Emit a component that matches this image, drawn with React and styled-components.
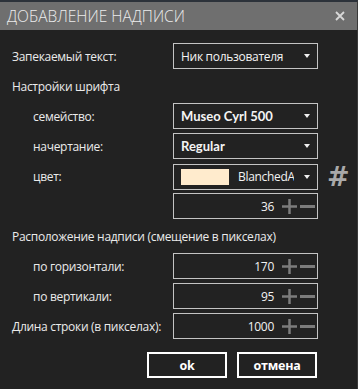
import React from "react";
import styled, { createGlobalStyle } from "styled-components";

const Global = createGlobalStyle`
  html, body { margin: 0; padding: 0; background: #222222; }
  body { font-family: "Open Sans", "Noto Sans", sans-serif; }
  * { box-sizing: border-box; }
`;

const Window = styled.div`
  width: 358px;
  height: 389px;
  background: #222222;
  border-top: 2px solid #2c323a;
  border-right: 1px solid #3a3a3a;
  display: flex;
  flex-direction: column;
`;

const TitleBar = styled.div`
  height: 28px;
  background: #6f6f6f;
  display: flex;
  align-items: center;
  justify-content: space-between;
  padding: 0 12px 0 7px;
`;

const Title = styled.div`
  font-family: "Open Sans", sans-serif;
  font-weight: 300;
  font-size: 15.5px;
  color: #ececec;
`;

const Close = styled.div`
  width: 10px;
  height: 10px;
  display: flex;
`;

const Form = styled.div`
  display: flex;
  flex-direction: column;
  gap: 4px;
  padding: 13px 0 0 12px;
`;

const Row = styled.div`
  display: grid;
  grid-template-columns: 161px 145px auto;
  align-items: center;
  height: 26px;
`;

const Label = styled.div`
  font-family: "Open Sans", sans-serif;
  font-size: 12px;
  letter-spacing: -0.3px;
  color: #ebebeb;
  padding-left: ${(p) => (p.$indent ? "21px" : "0")};
  white-space: nowrap;
  grid-column: ${(p) => (p.$wide ? "1 / span 3" : "auto")};
`;

const Box = styled.div`
  height: 26px;
  border: 1px solid #c4c4c4;
  display: flex;
  align-items: center;
  color: #f2f2f2;
`;

const SelectText = styled.span`
  flex: 1;
  padding-left: 7px;
  font-family: ${(p) => (p.$bold ? '"Lato", sans-serif' : '"Open Sans", sans-serif')};
  font-weight: ${(p) => (p.$bold ? 700 : 400)};
  font-size: ${(p) => (p.$bold ? "13px" : "12px")};
  letter-spacing: ${(p) => (p.$bold ? "0" : "-0.3px")};
  color: #f4f4f4;
  white-space: nowrap;
  overflow: hidden;
`;

const Arrow = styled.span`
  width: 0;
  height: 0;
  border-left: 3.5px solid transparent;
  border-right: 3.5px solid transparent;
  border-top: 4px solid #f0f0f0;
  margin: 0 7px 0 8px;
`;

const Swatch = styled.span`
  width: 48px;
  height: 16px;
  background: #ffebcd;
  margin-left: 7px;
  flex: none;
`;

const ColorName = styled.span`
  width: 56px;
  margin-left: 9px;
  overflow: hidden;
  white-space: nowrap;
  font-family: "Open Sans", sans-serif;
  font-size: 12px;
  letter-spacing: -0.3px;
  color: #f2f2f2;
`;

const Spacer = styled.span`
  flex: 1;
`;

const Hash = styled.div`
  font-family: "DejaVu Sans", sans-serif;
  font-weight: 700;
  font-size: 27px;
  color: #a9a9a9;
  padding-left: 9px;
  line-height: 1;
`;

const Value = styled.span`
  flex: 1;
  text-align: right;
  font-family: "Open Sans", sans-serif;
  font-size: 12px;
  letter-spacing: -0.3px;
  color: #f2f2f2;
  padding-right: 8px;
`;

const Steppers = styled.span`
  display: flex;
  align-items: center;
  gap: 3px;
  padding-right: 2px;
`;

const Buttons = styled.div`
  display: flex;
  justify-content: flex-end;
  gap: 10px;
  width: 305px;
  margin-top: 9px;
`;

const Button = styled.div`
  width: 80px;
  height: 26px;
  border: 2px solid #ffffff;
  display: flex;
  align-items: center;
  justify-content: center;
  font-family: "Open Sans", sans-serif;
  font-weight: 700;
  font-size: 12.5px;
  letter-spacing: -0.2px;
  color: #ffffff;
`;

const Plus = () => (
  <svg width="15" height="15" viewBox="0 0 15 15">
    <rect x="0" y="6.25" width="15" height="2.5" fill="#7c7c7c" />
    <rect x="6.25" y="0" width="2.5" height="15" fill="#7c7c7c" />
  </svg>
);

const Minus = () => (
  <svg width="15" height="15" viewBox="0 0 15 15">
    <rect x="0" y="6" width="15" height="3" fill="#7c7c7c" />
  </svg>
);

const Select = ({ text, bold }) => (
  <Box>
    <SelectText $bold={bold}>{text}</SelectText>
    <Arrow />
  </Box>
);

const NumberBox = ({ value }) => (
  <Box>
    <Value>{value}</Value>
    <Steppers>
      <Plus />
      <Minus />
    </Steppers>
  </Box>
);

export default function App() {
  return (
    <>
      <Global />
      <Window>
        <TitleBar>
          <Title>ДОБАВЛЕНИЕ НАДПИСИ</Title>
          <Close>
            <svg width="10" height="10" viewBox="0 0 10 10">
              <path d="M1 1 L9 9 M9 1 L1 9" stroke="#d8d8d8" strokeWidth="1.8" />
            </svg>
          </Close>
        </TitleBar>
        <Form>
          <Row>
            <Label>Запекаемый текст:</Label>
            <Select text="Ник пользователя" />
          </Row>
          <Row>
            <Label $wide>Настройки шрифта</Label>
          </Row>
          <Row>
            <Label $indent>семейство:</Label>
            <Select text="Museo Cyrl 500" bold />
          </Row>
          <Row>
            <Label $indent>начертание:</Label>
            <Select text="Regular" bold />
          </Row>
          <Row>
            <Label $indent>цвет:</Label>
            <Box>
              <Swatch />
              <ColorName>BlanchedA</ColorName>
              <Spacer />
              <Arrow />
            </Box>
            <Hash>#</Hash>
          </Row>
          <Row>
            <span />
            <NumberBox value="36" />
          </Row>
          <Row>
            <Label $wide>Расположение надписи (смещение в пикселах)</Label>
          </Row>
          <Row>
            <Label $indent>по горизонтали:</Label>
            <NumberBox value="170" />
          </Row>
          <Row>
            <Label $indent>по вертикали:</Label>
            <NumberBox value="95" />
          </Row>
          <Row>
            <Label>Длина строки (в пикселах):</Label>
            <NumberBox value="1000" />
          </Row>
          <Buttons>
            <Button>ok</Button>
            <Button>отмена</Button>
          </Buttons>
        </Form>
      </Window>
    </>
  );
}
